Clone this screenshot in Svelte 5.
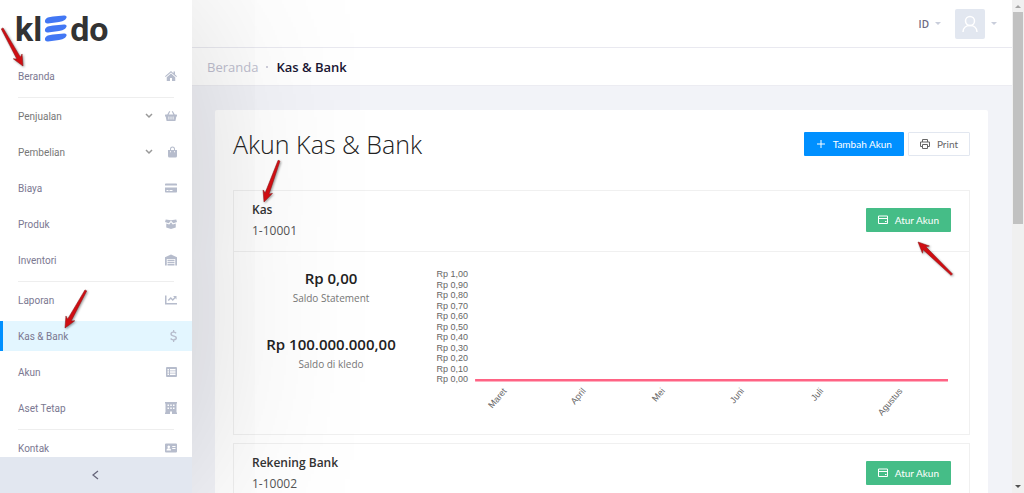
<script lang="ts">
  type MenuItem = {
    label: string;
    icon: string;
    children?: boolean;
    active?: boolean;
  };

  const menu: MenuItem[][] = [
    [{ label: 'Beranda', icon: 'home' }],
    [
      { label: 'Penjualan', icon: 'basket', children: true },
      { label: 'Pembelian', icon: 'bag', children: true },
      { label: 'Biaya', icon: 'card' },
      { label: 'Produk', icon: 'box' },
      { label: 'Inventori', icon: 'warehouse' },
    ],
    [
      { label: 'Laporan', icon: 'chart' },
      { label: 'Kas & Bank', icon: 'dollar', active: true },
      { label: 'Akun', icon: 'list' },
      { label: 'Aset Tetap', icon: 'building' },
    ],
    [{ label: 'Kontak', icon: 'contact' }],
  ];

  // 24x24 shapes, filled with evenodd so inner shapes cut through
  const icons: Record<string, string> = {
    home: 'M12 2 0 12.500l1.400 1.600L12 5l10.600 9.100 1.400-1.600-4-3.500V3h-3v3.400zM12 7l-8.500 7.400V22H10v-6h4v6h6.500v-7.600z',
    basket: 'M8.500 2 10.500 3.200 7.400 9h9.200l-3.100-5.800L15.500 2l4 7H23a1 1 0 0 1 1 1v2a1 1 0 0 1-1 1h-.4l-1.500 8a1.500 1.500 0 0 1-1.500 1H4.400a1.500 1.500 0 0 1-1.500-1L1.400 13H1a1 1 0 0 1-1-1v-2a1 1 0 0 1 1-1h3.500zM7 13v6h1.600v-6zM11.200 13v6h1.600v-6zM15.400 13v6H17v-6z',
    bag: 'M10 8V6a5 5 0 0 1 10 0v2h4v12a3 3 0 0 1-3 3H9a3 3 0 0 1-3-3V8zM12 8h6V6a3 3 0 0 0-6 0zM10 10.500v2h2v-2zM18 10.500v2h2v-2z',
    card: 'M1.500 3h21A1.500 1.500 0 0 1 24 4.500V7H0V4.500A1.500 1.500 0 0 1 1.500 3zM0 11h24v8.500a1.500 1.500 0 0 1-1.500 1.500h-21A1.500 1.500 0 0 1 0 19.500zM3 16v2h4v-2zM9 16v2h6v-2z',
    box: 'M1.500 3 12 4.500 22.500 3 24 8l-7.500 2.500L12 5.500l-4.500 5L0 8zM2.500 11l6 1.800L12 8.500l3.500 4.300 6-1.800v8L12 22l-9.500-3z',
    warehouse: 'M12 1 24 6.500V23h-3.500V10h-17v13H0V6.500zM5 11.500h14v3H5zM5 16h14v2.500H5zM5 20h14v3H5z',
    chart: 'M0 3h3v15h21v3H0zM16 4h7v7l-2.300-2.300-5.200 5.200-4-4L7.500 14l-2-2 6-6 4 4 3.200-3.500z',
    dollar: 'M16 0h2.500v3c2.300.3 3.800 1.300 4.700 2.500l-2 2C20.200 6 18.800 5.500 17 5.500c-2 0-3.300.8-3.300 2.300 0 4 10.300 1.700 10.300 8.200 0 3-2.200 4.700-5.500 5.100V24H16v-2.900c-2.500-.3-4.500-1.300-5.700-3.100l2-2c1.300 1.600 3 2.500 5 2.500 2.300 0 3.700-.9 3.700-2.400 0-4.300-10.300-1.900-10.300-8.200 0-2.700 2-4.500 5.300-4.900z',
    list: 'M4 2h18a2 2 0 0 1 2 2v16a2 2 0 0 1-2 2H4a2 2 0 0 1-2-2V4a2 2 0 0 1 2-2zM5 6v3h3V6zM10 6v3h11V6zM5 10.500v3h3v-3zM10 10.500v3h11v-3zM5 15v3h3v-3zM10 15v3h11v-3z',
    building: 'M0 0h24v3h-1v18h1v3H14v-5h-4v5H0v-3h1V3H0zM5 5v3h3V5zM10.500 5v3h3V5zM16 5v3h3V5zM5 11v3h3v-3zM10.500 11v3h3v-3zM16 11v3h3v-3z',
    contact: 'M2 3h20a2 2 0 0 1 2 2v14a2 2 0 0 1-2 2H2a2 2 0 0 1-2-2V5a2 2 0 0 1 2-2zM7.500 7a2.700 2.700 0 1 0 .1 0zM3 17h9c0-3-1.500-4.500-4.500-4.500S3 14 3 17zM14.500 8v2H21V8zM14.500 12v2H21v-2z',
  };

  const accounts = [
    { name: 'Kas', code: '1-10001', balance: { statement: 'Rp 0,00', kledo: 'Rp 100.000.000,00' } },
    { name: 'Rekening Bank', code: '1-10002' },
  ];

  const ticks = Array.from({ length: 11 }, (_, i) => ({
    label: 'Rp ' + (1 - i / 10).toFixed(2).replace('.', ','),
    y: Math.round(10 + i * 10.5),
  }));
  const months = ['Maret', 'April', 'Mei', 'Juni', 'Juli', 'Agustus'].map((label, i) => ({
    label,
    x: 77 + i * 79,
  }));

  // Pointers drawn over the page: tip position and heading
  const pointers = [
    { x: 23, y: 66, angle: 61, length: 43 },
    { x: 65, y: 328, angle: 119, length: 43 },
    { x: 264, y: 202, angle: 110, length: 44 },
    { x: 918, y: 242, angle: 224, length: 47 },
  ];
</script>

<div class="app">
  <aside class="sidebar">
    <a class="logo" href="#home" aria-label="kledo">
      <span>kl</span>
      <svg viewBox="0 0 24 28" width="24" height="28" aria-hidden="true">
        {#each [0, 9, 18] as y}
          <path transform="translate(0 {y})" d="M1 5.500C2 2.500 5 2 9 1.500L20 .5c2-.2 3 .8 2.500 2.300C21 6 18 6.500 15 7L4 8.500c-2 .2-3.500-1-3-3z" />
        {/each}
      </svg>
      <span>do</span>
    </a>
    <nav>
      {#each menu as group}
        <ul>
          {#each group as item}
            <li>
              <a class="item" class:active={item.active} class:parent={item.children} href="#{item.icon}">
                <span class="label">{item.label}</span>
                {#if item.children}
                  <svg class="chevron" viewBox="0 0 8 8" width="8" height="8" aria-hidden="true"><path d="m1 2 3 3 3-3" /></svg>
                {/if}
                <svg class="icon" viewBox="0 0 24 24" width="12" height="12" aria-hidden="true"><path d={icons[item.icon]} /></svg>
              </a>
            </li>
          {/each}
        </ul>
      {/each}
    </nav>
    <button class="collapse" aria-label="Tutup menu">
      <svg viewBox="0 0 8 10" width="8" height="10" aria-hidden="true"><path d="M6 1 1 5l5 4" /></svg>
    </button>
  </aside>

  <div class="page">
    <header class="topbar">
      <button class="lang">ID <span class="caret"></span></button>
      <button class="user" aria-label="Profil">
        <span class="avatar">
          <svg viewBox="0 0 16 18" width="16" height="18" aria-hidden="true">
            <circle cx="8" cy="6" r="4.500" />
            <path d="M1 17c0-4 3-6.500 7-6.500s7 2.500 7 6.500" />
          </svg>
        </span>
        <span class="caret"></span>
      </button>
    </header>
    <div class="breadcrumb">
      <a href="#home">Beranda</a>
      <span class="dot"></span>
      <strong>Kas &amp; Bank</strong>
    </div>

    <main>
      <section class="card">
        <div class="card-head">
          <h1>Akun Kas &amp; Bank</h1>
          <div class="actions">
            <button class="btn primary">
              <svg viewBox="0 0 10 10" width="10" height="10" aria-hidden="true"><path d="M5 1v8M1 5h8" /></svg>
              Tambah Akun
            </button>
            <button class="btn outline">
              <svg viewBox="0 0 10 10" width="10" height="10" aria-hidden="true"><path d="M2.500 3V.5h5V3M2.500 7.500h-2V3h9v4.500h-2M2.500 5.500h5v4h-5z" /></svg>
              Print
            </button>
          </div>
        </div>

        {#each accounts as account}
          <article class="panel">
            <div class="panel-head">
              <div>
                <h2>{account.name}</h2>
                <p class="code">{account.code}</p>
              </div>
              <button class="btn success">
                <svg viewBox="0 0 10 10" width="10" height="10" aria-hidden="true"><path d="M.5 1h9v7.500h-9zM.5 3.500h9M7 6.500h1.500" /></svg>
                Atur Akun
              </button>
            </div>
            {#if account.balance}
              <div class="panel-body">
                <dl>
                  <div>
                    <dd>{account.balance.statement}</dd>
                    <dt>Saldo Statement</dt>
                  </div>
                  <div>
                    <dd>{account.balance.kledo}</dd>
                    <dt>Saldo di kledo</dt>
                  </div>
                </dl>
                <svg class="chart" viewBox="0 0 520 156" role="img" aria-label="Saldo {account.name}">
                  {#each ticks as tick}
                    <text x="38" y={tick.y + 3} text-anchor="end">{tick.label}</text>
                  {/each}
                  <path class="line" d="M45 116h472" />
                  {#each months as month}
                    <text transform="translate({month.x} 127) rotate(-50)" text-anchor="end">{month.label}</text>
                  {/each}
                </svg>
              </div>
            {/if}
          </article>
        {/each}
      </section>
    </main>
  </div>

  <div class="scrollbar" aria-hidden="true">
    <svg viewBox="0 0 12 12" width="12" height="12"><path d="M3 8h6L6 5z" fill="#a3a3a3" /></svg>
    <div class="thumb"></div>
    <svg viewBox="0 0 12 12" width="12" height="12"><path d="M3 4h6L6 7z" fill="#505050" /></svg>
  </div>

  <svg class="pointers" aria-hidden="true">
    {#each pointers as p}
      <path
        transform="translate({p.x} {p.y}) rotate({p.angle})"
        d="M0 0-11-5-9-2-{p.length}-1v2L-9 2l-2 3z"
      />
    {/each}
  </svg>
</div>

<style>
  :global(body) {
    overflow: hidden;
  }

  .app {
    position: relative;
    display: grid;
    grid-template-columns: 192px 1fr 12px;
    height: 100vh;
    overflow: hidden;
    background: #f2f3f8;
    color: #333;
    font-family: "Open Sans", "Noto Sans", sans-serif;
    font-size: 10px;
  }

  .app * {
    box-sizing: border-box;
  }

  button {
    padding: 0;
    border: 0;
    background: none;
    color: inherit;
    font: inherit;
    cursor: pointer;
  }

  a {
    color: inherit;
    text-decoration: none;
  }

  svg {
    flex: none;
  }

  .sidebar {
    position: relative;
    z-index: 1;
    display: flex;
    flex-direction: column;
    min-height: 0;
    background: #fff;
    box-shadow: 0 0 180px rgba(0, 0, 0, 0.18);
  }

  .logo {
    display: flex;
    align-items: center;
    flex: none;
    gap: 2px;
    height: 58px;
    padding-left: 15px;
    color: #333;
    font-family: Roboto, sans-serif;
    font-size: 34px;
    font-weight: 700;
  }

  .logo path {
    fill: #4277f4;
  }

  nav {
    flex: 1;
    min-height: 0;
    overflow: hidden;
  }

  ul {
    margin: 0;
    padding: 0;
    list-style: none;
  }

  ul + ul::before {
    content: "";
    display: block;
    margin: 3px 18px 0;
    border-top: 1px solid #eee;
  }

  li {
    padding: 3px 0;
  }

  .item {
    display: flex;
    align-items: center;
    height: 30px;
    padding: 0 15px 0 18px;
    color: #7b7891;
    font-family: Roboto, sans-serif;
  }

  .item.parent {
    color: #777;
  }

  .item.active {
    background: #e3f6ff;
    box-shadow: inset 3px 0 #0090ff;
  }

  .label {
    flex: 1;
  }

  .chevron {
    margin-right: 12px;
    fill: none;
    stroke: #999;
    stroke-width: 1.5;
  }

  .icon {
    fill: #b6bccc;
    fill-rule: evenodd;
  }

  .collapse {
    display: grid;
    place-items: center;
    flex: none;
    height: 36px;
    background: #e2e7f0;
  }

  .collapse path {
    fill: none;
    stroke: #66667a;
    stroke-width: 1.3;
  }

  .page {
    min-width: 0;
    min-height: 0;
    overflow: hidden;
  }

  .topbar {
    display: flex;
    align-items: center;
    justify-content: flex-end;
    gap: 14px;
    height: 48px;
    padding-right: 15px;
    border-bottom: 1px solid #e9e9f0;
    background: #fff;
  }

  .lang,
  .user {
    display: flex;
    align-items: center;
    gap: 6px;
  }

  .lang {
    color: #6c6880;
    font-weight: 600;
  }

  .caret {
    border: 3px solid transparent;
    border-top-color: #c9cedb;
    border-bottom: 0;
  }

  .avatar {
    display: grid;
    place-items: center;
    width: 30px;
    height: 30px;
    border-radius: 2px;
    background: #e2e7f0;
  }

  .avatar svg {
    fill: none;
    stroke: #fff;
    stroke-width: 1.5;
  }

  .breadcrumb {
    display: flex;
    align-items: center;
    gap: 8px;
    height: 38px;
    padding-left: 15px;
    border-bottom: 1px solid #ececf2;
    background: #fff;
    color: #c0bfd0;
    font-size: 13px;
  }

  .breadcrumb strong {
    color: #1a1633;
    font-weight: 600;
  }

  .dot {
    width: 2px;
    height: 2px;
    border-radius: 1px;
    background: #c0bfd0;
  }

  main {
    padding: 24px 24px 24px 23px;
  }

  .card {
    padding: 18px;
    border-radius: 2px;
    background: #fff;
  }

  .card-head {
    display: flex;
    align-items: center;
    justify-content: space-between;
    height: 32px;
    margin-bottom: 30px;
  }

  h1 {
    margin: 0;
    color: #222;
    font-size: 25px;
    font-weight: 300;
  }

  .actions {
    display: flex;
    gap: 4px;
  }

  .btn {
    display: flex;
    align-items: center;
    gap: 7px;
    height: 24px;
    padding: 0 11px;
    border: 1px solid transparent;
    border-radius: 1px;
    color: #fff;
    font-family: Lato, sans-serif;
    font-size: 10px;
  }

  .btn svg {
    fill: none;
    stroke: currentColor;
  }

  .primary {
    background: #0090ff;
  }

  .outline {
    border-color: #e2e7f0;
    background: #fff;
    color: #666;
  }

  .success {
    background: #45bd87;
  }

  .panel {
    border: 1px solid #f0f0f0;
  }

  .panel + .panel {
    margin-top: 8px;
  }

  .panel-head {
    display: flex;
    align-items: center;
    justify-content: space-between;
    height: 61px;
    padding: 0 18px 2px;
    border-bottom: 1px solid #f0f0f0;
  }

  h2,
  p {
    margin: 0;
  }

  h2 {
    font-size: 12px;
    font-weight: 600;
    line-height: 22px;
  }

  .code {
    color: #555;
    font-size: 12px;
    line-height: 20px;
  }

  .panel-body {
    display: grid;
    grid-template-columns: 158px 1fr;
    gap: 20px;
    padding: 12px 18px 14px;
  }

  dl {
    display: flex;
    flex-direction: column;
    gap: 26px;
    margin: 4px 0 0;
    text-align: center;
  }

  dl div {
    display: flex;
    flex-direction: column;
  }

  dd {
    margin: 0;
    color: #222;
    font-size: 15px;
    font-weight: 600;
    line-height: 20px;
  }

  dt {
    color: #777;
    line-height: 20px;
  }

  .chart {
    width: 100%;
  }

  .chart text {
    fill: #666;
    font-family: "Liberation Sans", Arial, sans-serif;
    font-size: 9px;
  }

  .line {
    stroke: #ff6384;
    stroke-width: 2.5;
  }

  .scrollbar {
    display: flex;
    flex-direction: column;
    align-items: center;
    background: #f0f0f0;
  }

  .thumb {
    width: 10px;
    height: 43%;
    margin-bottom: auto;
    background: #c1c1c1;
  }

  .pointers {
    position: absolute;
    z-index: 2;
    inset: 0;
    width: 100%;
    height: 100%;
    fill: #d00d12;
    stroke: #8f1517;
    stroke-width: 0.5;
    filter: drop-shadow(1px 1px 1px rgba(0, 0, 0, 0.4));
    pointer-events: none;
  }
</style>
